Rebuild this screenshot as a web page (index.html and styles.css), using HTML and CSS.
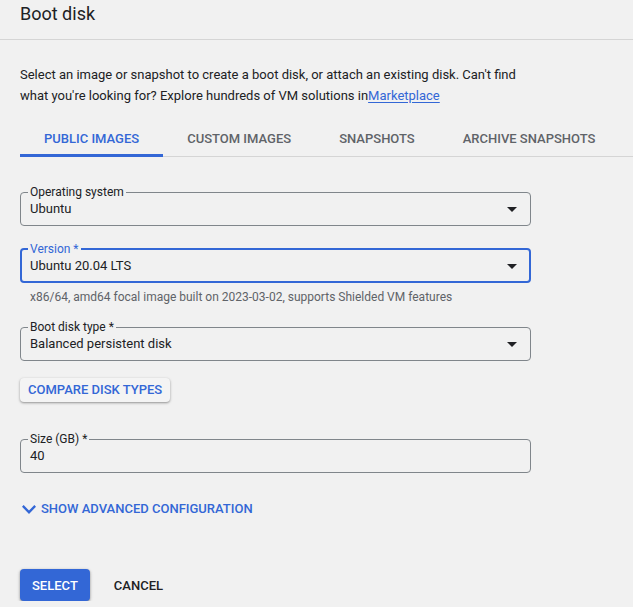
FILE: index.html
```html
<!DOCTYPE html>
<html lang="en">
<head>
<meta charset="utf-8">
<title>Boot disk</title>
<link rel="stylesheet" href="styles.css">
</head>
<body>
<header class="header">
  <h1 class="title">Boot disk</h1>
</header>
<main class="content">
  <p class="desc">Select an image or snapshot to create a boot disk, or attach an existing disk. Can't find what you're looking for? Explore hundreds of VM solutions in<a class="link" href="#">Marketplace</a></p>

  <nav class="tabs">
    <div class="tab tab-active">PUBLIC IMAGES</div>
    <div class="tab">CUSTOM IMAGES</div>
    <div class="tab">SNAPSHOTS</div>
    <div class="tab">ARCHIVE SNAPSHOTS</div>
  </nav>

  <fieldset class="field field-os">
    <legend class="field-label">Operating system</legend>
    <div class="field-row">
      <span class="field-value">Ubuntu</span>
      <svg class="arrow" width="10" height="5" viewBox="0 0 10 5"><path d="M0 0l5 5 5-5z" fill="#202124"/></svg>
    </div>
  </fieldset>

  <fieldset class="field field-focused field-version">
    <legend class="field-label">Version *</legend>
    <div class="field-row">
      <span class="field-value">Ubuntu 20.04 LTS</span>
      <svg class="arrow" width="10" height="5" viewBox="0 0 10 5"><path d="M0 0l5 5 5-5z" fill="#202124"/></svg>
    </div>
  </fieldset>
  <div class="hint">x86/64, amd64 focal image built on 2023-03-02, supports Shielded VM features</div>

  <fieldset class="field field-type">
    <legend class="field-label">Boot disk type *</legend>
    <div class="field-row">
      <span class="field-value">Balanced persistent disk</span>
      <svg class="arrow" width="10" height="5" viewBox="0 0 10 5"><path d="M0 0l5 5 5-5z" fill="#202124"/></svg>
    </div>
  </fieldset>

  <button class="btn-raised" type="button">COMPARE DISK TYPES</button>

  <fieldset class="field field-size">
    <legend class="field-label">Size (GB) *</legend>
    <div class="field-row">
      <span class="field-value">40</span>
    </div>
  </fieldset>

  <div class="advanced">
    <svg class="chevron" width="14" height="9" viewBox="6 8.59 12 7.41" preserveAspectRatio="none"><path d="M16.59 8.59L12 13.17 7.41 8.59 6 10l6 6 6-6z" fill="#3367d6"/></svg>
    <span>SHOW ADVANCED CONFIGURATION</span>
  </div>

  <div class="actions">
    <button class="btn-primary" type="button">SELECT</button>
    <button class="btn-text" type="button">CANCEL</button>
  </div>
</main>
</body>
</html>
```

FILE: styles.css
```css
* { box-sizing: border-box; }

html, body {
  margin: 0;
  padding: 0;
  background: #f1f1f1;
  font-family: Roboto, "Liberation Sans", Arial, sans-serif;
  color: #202124;
}

.header {
  height: 40px;
  padding: 2px 0 0 20px;
  border-bottom: 1px solid #d5d5d5;
}

.title {
  margin: 0;
  font-size: 18px;
  font-weight: 400;
  line-height: 24px;
  color: #202124;
}

.content {
  padding-left: 20px;
}

.desc {
  margin: 24px 0 0 0;
  width: 525px;
  font-size: 13px;
  line-height: 21px;
}

.link {
  color: #3367d6;
  text-decoration: underline;
  text-underline-offset: 2px;
}

.tabs {
  display: flex;
  margin-top: 14px;
  border-bottom: 1px solid #d5d5d5;
}

.tab {
  padding: 11px 24px 7px;
  font-size: 13px;
  font-weight: 500;
  line-height: 16px;
  color: #5f6368;
  border-bottom: 3px solid transparent;
  margin-bottom: -1px;
}

.tab-active {
  color: #3367d6;
  border-bottom-color: #3367d6;
}

.field {
  width: 511px;
  margin: 28px 0 0 0;
  padding: 0 13px 6px 9px;
  border: 1px solid #80868b;
  border-radius: 4px;
  min-width: 0;
}

.field-focused {
  border: 2px solid #3367d6;
  padding: 0 12px 5px 8px;
}

.field-version { margin-top: 16px; }
.field-type { margin-top: 15px; }
.field-size { margin-top: 30px; }

.field-label {
  margin-left: -2px;
  padding: 0 2px;
  font-size: 12px;
  line-height: 14px;
  color: #202124;
}

.field-focused .field-label {
  color: #3367d6;
}

.field-row {
  display: flex;
  align-items: center;
  height: 20px;
}

.field-value {
  flex: 1;
  font-size: 13px;
  line-height: 20px;
}

.arrow {
  display: block;
  flex: none;
}

.hint {
  margin-top: 6px;
  padding-left: 10px;
  font-size: 12px;
  line-height: 16px;
  color: #5f6368;
}

.btn-raised {
  display: block;
  margin-top: 17px;
  height: 24px;
  padding: 0 8px;
  border: none;
  border-radius: 4px;
  background: #f4f4f4;
  box-shadow: 0 1px 2px rgba(0, 0, 0, 0.3), 0 1px 3px 1px rgba(0, 0, 0, 0.08);
  font-family: inherit;
  font-size: 13px;
  font-weight: 500;
  line-height: 24px;
  color: #3367d6;
}

.advanced {
  display: flex;
  align-items: center;
  gap: 5px;
  margin-top: 28px;
  padding-left: 2px;
  font-size: 13px;
  font-weight: 500;
  line-height: 16px;
  color: #3367d6;
}

.chevron { display: block; }

.actions {
  display: flex;
  align-items: center;
  gap: 12px;
  margin-top: 52px;
}

.btn-primary {
  height: 32px;
  padding: 0 12px;
  border: none;
  border-radius: 4px;
  background: #3367d6;
  color: #fff;
  box-shadow: 0 1px 2px rgba(0, 0, 0, 0.3), 0 1px 3px 1px rgba(0, 0, 0, 0.12);
  font-family: inherit;
  font-size: 13px;
  font-weight: 500;
}

.btn-text {
  height: 32px;
  padding: 0 12px;
  border: none;
  background: transparent;
  color: #202124;
  font-family: inherit;
  font-size: 13px;
  font-weight: 500;
}
```
